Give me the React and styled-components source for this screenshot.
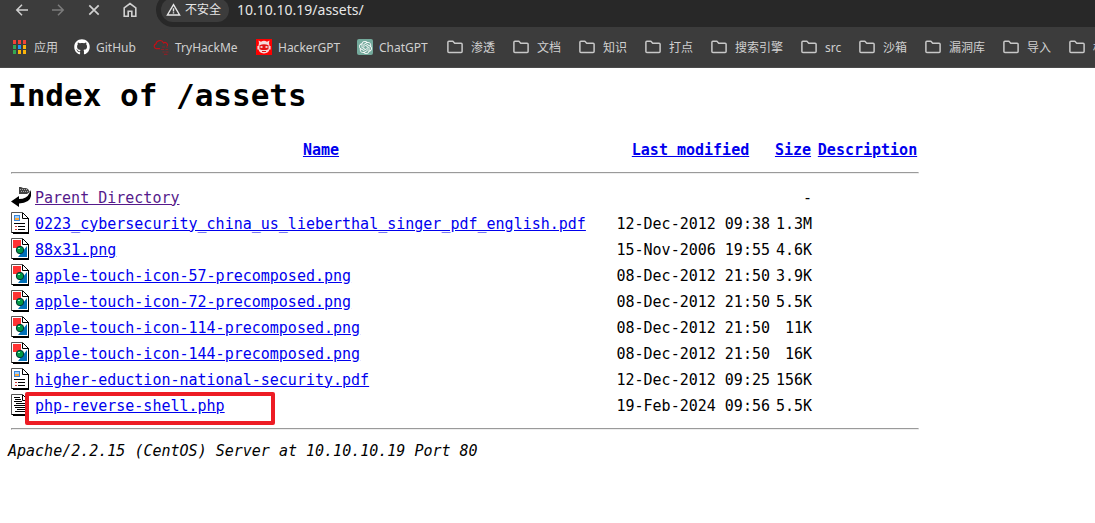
import React from "react";
import styled, { createGlobalStyle } from "styled-components";
import { FaGithub } from "react-icons/fa";
import { SiOpenai } from "react-icons/si";

const GlobalStyle = createGlobalStyle`
  body { margin: 0; background: #fff; color: #000; }
`;

const ui = `"Noto Sans", "Noto Sans CJK SC", sans-serif`;
const mono = `"DejaVu Sans Mono", "Liberation Mono", monospace`;

const Chrome = styled.header`
  background: #3c3c3c;
  border-bottom: 1px solid #4a4a4a;
  font-family: ${ui};
  color: #dedede;
  overflow: hidden;
`;

const NavBar = styled.div`
  display: flex;
  align-items: flex-start;
  height: 27px;
  padding-left: 12px;
`;

const NavButton = styled.button`
  width: 20px;
  height: 20px;
  margin-right: 16px;
  padding: 0;
  border: 0;
  background: none;
  color: ${(p) => (p.disabled ? "#7c7c7c" : "#d0d0d0")};
  svg { display: block; }
`;

const AddressBar = styled.div`
  flex: 1;
  display: flex;
  align-items: center;
  height: 34px;
  margin-top: -7px;
  box-sizing: border-box;
  padding-left: 5px;
  border-radius: 17px 0 0 17px;
  background: #282828;
`;

const SecurityChip = styled.button`
  display: flex;
  align-items: center;
  gap: 4px;
  height: 24px;
  padding: 0 8px 0 5px;
  border: 0;
  border-radius: 12px;
  background: #3c3c3c;
  color: #e6e6e6;
  font: 12px/24px ${ui};
  white-space: nowrap;
`;

const UrlInput = styled.input`
  flex: 1;
  min-width: 0;
  margin-left: 8px;
  padding: 0;
  border: 0;
  outline: 0;
  background: transparent;
  color: #e6e6e6;
  font: 14px/20px ${ui};
`;

const Bookmarks = styled.nav`
  display: flex;
  height: 40px;
  padding-left: 12px;
`;

const Bookmark = styled.a`
  flex: 0 0 ${(p) => p.$width}px;
  display: flex;
  align-items: center;
  gap: ${(p) => (p.$folder ? 8 : 6)}px;
  color: #d0d0d0;
  font-size: 12px;
  line-height: 16px;
  text-decoration: none;
  white-space: nowrap;
  svg { flex: none; }
`;

const BookmarkLabel = styled.span`
  padding-top: 2px;
`;

const Page = styled.main`
  padding: 8px;
  font: 15px/19px ${mono};
`;

const Title = styled.h1`
  margin: 0 0 24px;
  font-size: 31px;
  line-height: 38px;
`;

const Listing = styled.table`
  border-spacing: 2px;
  font: inherit;
`;

const Column = styled.col`
  width: ${(p) => p.$width}px;
`;

const Cell = styled.td`
  height: 22px;
  padding: 2px 1px 0;
  text-align: ${(p) => p.$align || "left"};
  white-space: nowrap;
`;

const IconCell = styled(Cell)`
  padding: 1px;
  svg { display: block; }
`;

const HeadCell = styled.th`
  padding: 1px;
`;

const Rule = styled.hr`
  margin: 8px 0;
  border: 1px solid;
  border-color: #9a9a9a #eeeeee #eeeeee #9a9a9a;
`;

const FileLink = styled.a`
  color: ${(p) => (p.$visited ? "#551a8b" : "#0000ee")};
`;

const Marked = styled.span`
  position: relative;
`;

const MarkBox = styled.span`
  position: absolute;
  top: -5px;
  left: -10px;
  width: 242px;
  height: 25px;
  border: 4px solid #ed1c24;
  border-radius: 2px;
  pointer-events: none;
`;

const Signature = styled.address`
  padding-top: 1px;
  font-style: italic;
`;

const Back = () => (
  <svg width="20" height="20" viewBox="0 0 20 20" fill="none" stroke="currentColor" strokeWidth="1.5">
    <path d="M16 10H5M10 4.8 4.8 10l5.2 5.2" />
  </svg>
);
const Forward = () => (
  <svg width="20" height="20" viewBox="0 0 20 20" fill="none" stroke="currentColor" strokeWidth="1.5">
    <path d="M4 10h11M10 4.8l5.2 5.2-5.2 5.2" />
  </svg>
);
const Stop = () => (
  <svg width="20" height="20" viewBox="0 0 20 20" fill="none" stroke="currentColor" strokeWidth="1.7">
    <path d="m5.3 5.3 9.4 9.4M14.7 5.3l-9.4 9.4" />
  </svg>
);
const Home = () => (
  <svg width="20" height="20" viewBox="0 0 20 20" fill="none" stroke="currentColor" strokeWidth="1.6">
    <path d="M4.2 16.2V7.8L10 3.6l5.8 4.2v8.4h-4v-5H8.2v5z" />
  </svg>
);
const Warning = () => (
  <svg width="15" height="14" viewBox="0 0 15 14" fill="none" stroke="currentColor" strokeWidth="1.4">
    <path d="M7.5 1.6 13.6 12H1.4zM7.5 5.2v3.2M7.5 9.3v1.3" />
  </svg>
);
const Folder = () => (
  <svg width="16" height="16" viewBox="0 0 16 16" fill="none" stroke="#c8c8c8" strokeWidth="1.5" strokeLinejoin="round">
    <path d="M.9 3.2q0-1 1-1h4l1.8 2h6.4q1 0 1 1v7.3q0 1-1 1H1.9q-1 0-1-1z" />
  </svg>
);
const Apps = () => (
  <svg width="14" height="14" viewBox="0 0 14 14">
    {["#f44336", "#f44336", "#f44336", "#34a853", "#2196f3", "#fbb40a", "#34a853", "#fbb40a", "#fbb40a"].map((c, i) => (
      <rect key={i} x={1 + (i % 3) * 5} y={Math.floor(i / 3) * 5} width="3" height="4" fill={c} />
    ))}
  </svg>
);
const Cloud = () => (
  <svg width="16" height="16" viewBox="0 0 16 16" fill="none" stroke="#c01018" strokeWidth="1.2">
    <path d="M7 9.6H3.2A2.4 2.4 0 0 1 3 4.900 4 4 0 0 1 10.600 3.900 2.600 2.600 0 0 1 14.400 7" />
    <path d="M9 8h3M13 8h2M8 10.500h3M12.500 10.500h2.500M9.500 13h2M12.500 13h3M11 15.300h3.500" stroke="#8a2026" />
  </svg>
);
const Robot = () => (
  <svg width="16" height="16" viewBox="0 0 16 16">
    <path fill="#f00" d="M0 0h16v16H0z" />
    <path fill="#f5d9d9" d="M3 4 2.500 1.500 5 2.700Q8 .8 11 2.700L13.500 1.500 13 4l.6 3h1v3.500h-1.200Q13 14 8 14.500 3 14 2.600 10.500H1.400V7h1z" />
    <path fill="#e31313" d="M3.500 6.200Q8 4.300 12.500 6.200v4Q8 12 3.500 10.200z" />
    <path fill="#fff" d="M4.500 7.200h2v1.500h-2zM9.500 7.200h2v1.500h-2z" />
    <path d="M6 12.500h4" stroke="#e31313" />
  </svg>
);
const GptMark = styled.span`
  display: flex;
  align-items: center;
  justify-content: center;
  width: 16px;
  height: 16px;
  border-radius: 2px;
  background: #74aa9c;
  color: #fff;
`;

const Sheet = ({ children }) => (
  <svg width="20" height="22" viewBox="0 0 20 22">
    <path fill="#fff" d="M1 1h11l5 5v14H1z" />
    <path fill="none" stroke="#555" d="M.5 21V.5H12" />
    <path fill="none" stroke="#000" d="M11.500 1v5.500H17M12 1l5.500 5.500" />
    <path fill="#000" d="M1 20h17v2H2v-1H1zM17 6h1v15h-1z" />
    {children}
  </svg>
);
const ParentIcon = () => (
  <svg width="20" height="22" viewBox="0 0 20 22">
    <path fill="#444" d="M8 1h2l2 1h3l2 1 2 3-3 2H8z" />
    <path stroke="#aaa" strokeDasharray="1 1" d="M9 3.500h7M10 5.500h7" />
    <path fill="#000" d="M20 4v6q-1 7-12 7.500V21L0 15.500 8 10v3q8 0 10.500-6z" />
  </svg>
);
const LayoutIcon = () => (
  <Sheet>
    <path fill="#3b86d8" d="M3 3h6v6H3z" />
    <path fill="#9fd0ff" d="M4 4h4v2H4z" />
    <path fill="#ffa93a" d="M4 6h4v2H4z" />
    <path stroke="#000" d="M3 11.500h11M7 14.500h7M7 17.500h7" />
    <path stroke="#c33" d="M4 14.500h2M4 17.500h2" />
  </Sheet>
);
const ImageIcon = () => (
  <Sheet>
    <path fill="#ff3333" d="M2 2h8v8H2z" />
    <path fill="#0070b8" d="M16 8v11H7z" />
    <circle cx="9" cy="12" r="3.700" fill="#009944" stroke="#033" />
    <path stroke="#9fc" d="M7 10.500h2" />
  </Sheet>
);
const TextIcon = () => (
  <Sheet>
    <path stroke="#000" d="M3 3.500h6M4 5.500h6M3 7.500h8M5 9.500h9M3 11.500h11M4 13.500h10M6 15.500h8M4 17.500h10" />
  </Sheet>
);

const bookmarks = [
  { label: "应用", icon: <Apps />, width: 62, folder: true },
  { label: "GitHub", icon: <FaGithub size={16} color="#fff" />, width: 79 },
  { label: "TryHackMe", icon: <Cloud />, width: 103 },
  { label: "HackerGPT", icon: <Robot />, width: 101 },
  { label: "ChatGPT", icon: <GptMark><SiOpenai size={13} /></GptMark>, width: 90 },
  { label: "渗透", width: 66 },
  { label: "文档", width: 66 },
  { label: "知识", width: 66 },
  { label: "打点", width: 66 },
  { label: "搜索引擎", width: 90 },
  { label: "src", width: 58 },
  { label: "沙箱", width: 66 },
  { label: "漏洞库", width: 78 },
  { label: "导入", width: 66 },
  { label: "权限", width: 66 },
];

const files = [
  { name: "0223_cybersecurity_china_us_lieberthal_singer_pdf_english.pdf", date: "12-Dec-2012 09:38", size: "1.3M", Icon: LayoutIcon },
  { name: "88x31.png", date: "15-Nov-2006 19:55", size: "4.6K", Icon: ImageIcon },
  { name: "apple-touch-icon-57-precomposed.png", date: "08-Dec-2012 21:50", size: "3.9K", Icon: ImageIcon },
  { name: "apple-touch-icon-72-precomposed.png", date: "08-Dec-2012 21:50", size: "5.5K", Icon: ImageIcon },
  { name: "apple-touch-icon-114-precomposed.png", date: "08-Dec-2012 21:50", size: "11K", Icon: ImageIcon },
  { name: "apple-touch-icon-144-precomposed.png", date: "08-Dec-2012 21:50", size: "16K", Icon: ImageIcon },
  { name: "higher-eduction-national-security.pdf", date: "12-Dec-2012 09:25", size: "156K", Icon: LayoutIcon },
  { name: "php-reverse-shell.php", date: "19-Feb-2024 09:56", size: "5.5K", Icon: TextIcon, marked: true },
];

const RuleRow = () => (
  <tr>
    <HeadCell colSpan={5}><Rule /></HeadCell>
  </tr>
);

export default function App() {
  return (
    <>
      <GlobalStyle />
      <Chrome>
        <NavBar>
          <NavButton aria-label="Back"><Back /></NavButton>
          <NavButton aria-label="Forward" disabled><Forward /></NavButton>
          <NavButton aria-label="Stop"><Stop /></NavButton>
          <NavButton aria-label="Home"><Home /></NavButton>
          <AddressBar>
            <SecurityChip><Warning />不安全</SecurityChip>
            <UrlInput aria-label="Address" defaultValue="10.10.10.19/assets/" />
          </AddressBar>
        </NavBar>
        <Bookmarks>
          {bookmarks.map(({ label, icon, width, folder }) => (
            <Bookmark key={label} href="#" $width={width} $folder={folder || !icon}>
              {icon || <Folder />}
              <BookmarkLabel>{label}</BookmarkLabel>
            </Bookmark>
          ))}
        </Bookmarks>
      </Chrome>
      <Page>
        <Title>Index of /assets</Title>
        <Listing>
          <colgroup>
            <Column $width={22} />
            <Column $width={574} />
            <Column $width={161} />
            <Column $width={40} />
            <Column $width={105} />
          </colgroup>
          <tbody>
            <tr>
              <HeadCell />
              <HeadCell><FileLink href="#">Name</FileLink></HeadCell>
              <HeadCell><FileLink href="#">Last modified</FileLink></HeadCell>
              <HeadCell><FileLink href="#">Size</FileLink></HeadCell>
              <HeadCell><FileLink href="#">Description</FileLink></HeadCell>
            </tr>
            <RuleRow />
            <tr>
              <IconCell><ParentIcon /></IconCell>
              <Cell><FileLink href="#" $visited>Parent Directory</FileLink></Cell>
              <Cell />
              <Cell $align="right">-</Cell>
              <Cell />
            </tr>
            {files.map(({ name, date, size, Icon, marked }) => (
              <tr key={name}>
                <IconCell><Icon /></IconCell>
                <Cell>
                  {marked ? (
                    <Marked><FileLink href="#">{name}</FileLink><MarkBox /></Marked>
                  ) : (
                    <FileLink href="#">{name}</FileLink>
                  )}
                </Cell>
                <Cell $align="right">{date}</Cell>
                <Cell $align="right">{size}</Cell>
                <Cell />
              </tr>
            ))}
            <RuleRow />
          </tbody>
        </Listing>
        <Signature>Apache/2.2.15 (CentOS) Server at 10.10.10.19 Port 80</Signature>
      </Page>
    </>
  );
}
